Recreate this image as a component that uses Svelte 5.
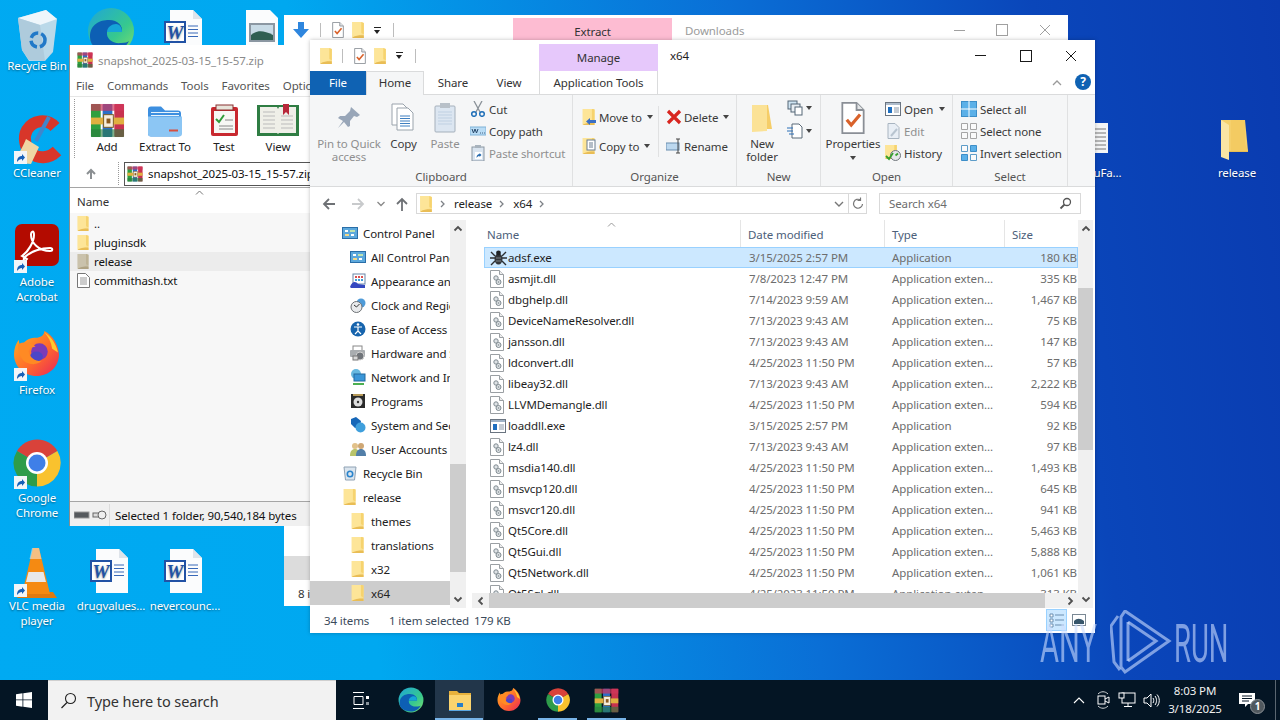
<script>
	const desktopIcons = [
		{ x: 37, y: 10, icon: 'bin', label: 'Recycle Bin' },
		{ x: 37, y: 117, icon: 'ccleaner', label: 'CCleaner', link: true },
		{ x: 37, y: 226, icon: 'acrobat', label: 'Adobe Acrobat', link: true },
		{ x: 37, y: 334, icon: 'firefox', label: 'Firefox', link: true },
		{ x: 37, y: 442, icon: 'chrome', label: 'Google Chrome', link: true },
		{ x: 37, y: 550, icon: 'vlc', label: 'VLC media player', link: true },
		{ x: 111, y: 550, icon: 'word', label: 'drugvalues...' },
		{ x: 185, y: 550, icon: 'word', label: 'nevercounc...' },
		{ x: 111, y: 0, icon: 'edge', label: '' },
		{ x: 185, y: 11, icon: 'word', label: '' },
		{ x: 262, y: 11, icon: 'image', label: '' },
		{ x: 1237, y: 117, icon: 'bigfolder', label: 'release' },
		{ x: 1103, y: 117, icon: 'notes', label: '...uFa...' }
	];

	const navItems = [
		{ name: 'Control Panel', icon: 'control' },
		{ name: 'All Control Panel Items', icon: 'control', child: true },
		{ name: 'Appearance and Personalization', icon: 'appearance', child: true },
		{ name: 'Clock and Region', icon: 'clock', child: true },
		{ name: 'Ease of Access', icon: 'ease', child: true },
		{ name: 'Hardware and Sound', icon: 'hardware', child: true },
		{ name: 'Network and Internet', icon: 'network', child: true },
		{ name: 'Programs', icon: 'programs', child: true },
		{ name: 'System and Security', icon: 'system', child: true },
		{ name: 'User Accounts', icon: 'users', child: true },
		{ name: 'Recycle Bin', icon: 'recycle' },
		{ name: 'release', icon: 'folder' },
		{ name: 'themes', icon: 'folder', child: true },
		{ name: 'translations', icon: 'folder', child: true },
		{ name: 'x32', icon: 'folder', child: true },
		{ name: 'x64', icon: 'folder', child: true, current: true }
	];

	const ext = 'Application exten...';
	const files = [
		{ name: 'adsf.exe', date: '3/15/2025 2:57 PM', type: 'Application', size: '180 KB', icon: 'bug', selected: true },
		{ name: 'asmjit.dll', date: '7/8/2023 12:47 PM', type: ext, size: '335 KB' },
		{ name: 'dbghelp.dll', date: '7/14/2023 9:59 AM', type: ext, size: '1,467 KB' },
		{ name: 'DeviceNameResolver.dll', date: '7/13/2023 9:43 AM', type: ext, size: '75 KB' },
		{ name: 'jansson.dll', date: '7/13/2023 9:43 AM', type: ext, size: '147 KB' },
		{ name: 'ldconvert.dll', date: '4/25/2023 11:50 PM', type: ext, size: '57 KB' },
		{ name: 'libeay32.dll', date: '7/13/2023 9:43 AM', type: ext, size: '2,222 KB' },
		{ name: 'LLVMDemangle.dll', date: '4/25/2023 11:50 PM', type: ext, size: '594 KB' },
		{ name: 'loaddll.exe', date: '3/15/2025 2:57 PM', type: 'Application', size: '92 KB', icon: 'app' },
		{ name: 'lz4.dll', date: '7/13/2023 9:43 AM', type: ext, size: '97 KB' },
		{ name: 'msdia140.dll', date: '4/25/2023 11:50 PM', type: ext, size: '1,493 KB' },
		{ name: 'msvcp120.dll', date: '4/25/2023 11:50 PM', type: ext, size: '645 KB' },
		{ name: 'msvcr120.dll', date: '4/25/2023 11:50 PM', type: ext, size: '941 KB' },
		{ name: 'Qt5Core.dll', date: '4/25/2023 11:50 PM', type: ext, size: '5,463 KB' },
		{ name: 'Qt5Gui.dll', date: '4/25/2023 11:50 PM', type: ext, size: '5,888 KB' },
		{ name: 'Qt5Network.dll', date: '4/25/2023 11:50 PM', type: ext, size: '1,061 KB' },
		{ name: 'Qt5Sql.dll', date: '4/25/2023 11:50 PM', type: ext, size: '313 KB' }
	];

	const rarItems = [
		{ name: '..', icon: 'folder' },
		{ name: 'pluginsdk', icon: 'folder' },
		{ name: 'release', icon: 'folder', current: true },
		{ name: 'commithash.txt', icon: 'txt' }
	];

	const rarTools = [
		{ label: 'Add', icon: 'rar', width: 52 },
		{ label: 'Extract To', icon: 'extract', width: 64 },
		{ label: 'Test', icon: 'test', width: 54 },
		{ label: 'View', icon: 'book', width: 54 }
	];

	const taskApps = [
		{ icon: 'edge' },
		{ icon: 'explorer', active: true, open: true },
		{ icon: 'firefox' },
		{ icon: 'chrome', open: true },
		{ icon: 'rar', open: true }
	];
</script>

{#snippet folder(w = 14, h = 18)}
	<svg width={w} height={h} viewBox="0 0 14 18">
		<path d="M0 0h10l3 1v17H0z" fill="#fbe08f" />
		<path d="M10 0v12l3 2V1z" fill="#f6d36f" />
		<path d="M3 15h10v3H0l3-3z" fill="#e9bd55" />
		<path d="M0 0h10v14l-10 3z" fill="#fde598" />
	</svg>
{/snippet}

{#snippet propsDoc(size = 16)}
	<svg width={size} height={size} viewBox="0 0 16 18">
		<path d="M2 .5h8l4 4v13H2z" fill="#fff" stroke="#8a8f96" />
		<path d="M10 .5v4h4" fill="#e4e6e8" stroke="#8a8f96" />
		<path d="M4.5 10l2.5 3 5-6" fill="none" stroke="#d9622b" stroke-width="1.8" />
	</svg>
{/snippet}

{#snippet dll()}
	<svg width="14" height="18" viewBox="0 0 14 18">
		<path d="M.5.5h9l4 4v13H.5z" fill="#fff" stroke="#9a9fa3" />
		<path d="M9.5.5v4h4" fill="#eee" stroke="#9a9fa3" />
		<circle cx="6" cy="8" r="2.2" fill="#dfe3e6" stroke="#7f8a90" />
		<circle cx="8.5" cy="12" r="2.5" fill="#dfe3e6" stroke="#7f8a90" />
		<circle cx="8.5" cy="12" r=".8" fill="#7f8a90" />
	</svg>
{/snippet}

{#snippet fileIcon(kind)}
	{#if kind === 'bug'}
		<svg width="17" height="17" viewBox="0 0 17 17">
			<ellipse cx="8.5" cy="10" rx="4" ry="5.5" fill="#33363a" />
			<circle cx="8.5" cy="4" r="2.4" fill="#1f2225" />
			<path d="M1 3l4 4M16 3l-4 4M0 9h5M17 9h-5M1 16l4-4M16 16l-4-4" stroke="#2c2f33" stroke-width="1.4" />
			<path d="M6 9h5M6 12h5" stroke="#7d8288" />
		</svg>
	{:else if kind === 'app'}
		<svg width="16" height="14" viewBox="0 0 16 14">
			<rect x=".5" y=".5" width="15" height="13" fill="#fff" stroke="#6a7480" />
			<rect x="1" y="1" width="14" height="2" fill="#9fb2c6" />
			<rect x="3" y="5" width="4" height="6" fill="#1f6fc0" />
			<path d="M9 6h5M9 8h5M9 10h5" stroke="#8a98a8" />
		</svg>
	{:else}
		{@render dll()}
	{/if}
{/snippet}

{#snippet shortcut()}
	<svg class="link" width="13" height="13" viewBox="0 0 13 13">
		<rect width="13" height="13" fill="#f2f5f8" />
		<path d="M3 11c0-4 2-6 5-6V3l3 3.5L8 10V8C6 8 4.500 9 3 11z" fill="#1660b8" />
	</svg>
{/snippet}

{#snippet wordDoc(size = 48)}
	<svg width={size} height={size} viewBox="0 0 48 48">
		<path d="M9-1h23l9 9v35H9z" fill="#fbfcfd" />
		<path d="M32-1v9h9z" fill="#dfe4ea" />
		<rect x="4" y="11" width="20" height="20" fill="#fff" stroke="#2252a5" stroke-width="2" />
		<text x="14" y="27.500" class="w-mark">W</text>
		<path d="M27 15h10M27 18.500h10M27 22h10M27 25.500h10" stroke="#3868b8" />
	</svg>
{/snippet}

{#snippet edgeIcon(size = 48)}
	<svg width={size} height={size} viewBox="0 0 48 48">
		<defs>
			<linearGradient id="edgeA" x1="0" y1="0" x2="1" y2="1">
				<stop offset="0" stop-color="#1fa6d8" />
				<stop offset=".6" stop-color="#36c88f" />
				<stop offset="1" stop-color="#7fe06a" />
			</linearGradient>
		</defs>
		<circle cx="24" cy="24" r="23" fill="url(#edgeA)" />
		<path d="M3 30C3 17 13 13 22 13c9 0 14 6 13 12H20c-1 7 6 12 14 11 4 0 7-1 8-2-4 8-11 11-18 11C12 45 3 40 3 30z" fill="#0d5fb4" />
		<path d="M20 25c0-5 5-8 9-8s6 4 6 8z" fill="#15a5d8" />
	</svg>
{/snippet}

{#snippet firefoxIcon(size = 48)}
	<svg width={size} height={size} viewBox="0 0 48 48">
		<defs>
			<linearGradient id="foxA" x1="0" y1="0" x2="1" y2="1">
				<stop offset="0" stop-color="#ffb21f" />
				<stop offset=".55" stop-color="#ff6a2c" />
				<stop offset="1" stop-color="#e8245c" />
			</linearGradient>
		</defs>
		<path d="M24 46C11 46 1 36 1 24 1 18 3 13 6 9c0 4 1 6 3 7 2-5 7-9 13-9 9 0 10-5 10-7 3 1 14 9 15 24 0 12-10 22-23 22z" fill="url(#foxA)" />
		<circle cx="27" cy="21" r="8.500" fill="#7b3bb8" />
		<ellipse cx="24" cy="26" rx="6.500" ry="5" fill="#4b46c8" />
		<path d="M5 14c6-4 13-3 18 2-5 0-7 3-7 5 1 6 6 10 13 10-6 5-16 3-20-3-3-4-4-9-4-14z" fill="#ff8a24" />
		<path d="M32 1c7 5 12 12 14 21l-6-4c-1-7-4-12-8-17z" fill="#ffc92e" />
	</svg>
{/snippet}

{#snippet chromeIcon(size = 48)}
	<svg width={size} height={size} viewBox="0 0 48 48">
		<path d="M24 24L4 12A23.500 23.500 0 0 1 44.400 12z" fill="#d9423a" />
		<path d="M24 24L44.400 12A23.500 23.500 0 0 1 24 47.500z" fill="#f9c22e" />
		<path d="M24 24L24 47.500A23.500 23.500 0 0 1 4 12z" fill="#2e9c4a" />
		<circle cx="24" cy="24" r="11" fill="#fff" />
		<circle cx="24" cy="24" r="8.500" fill="#3f7fe8" />
	</svg>
{/snippet}

{#snippet rarIcon(size = 36)}
	<svg class="no-shrink" width={size} height={size} viewBox="0 0 36 36">
		<rect x="1" y="1" width="10" height="34" rx="1" fill="#2e9f3f" />
		<rect x="13" y="1" width="10" height="34" rx="1" fill="#2c6fc8" />
		<rect x="25" y="1" width="10" height="34" rx="1" fill="#c8324f" />
		<rect x="1" y="1" width="34" height="7" fill="#d0365c" opacity=".7" />
		<rect x="1" y="27" width="34" height="8" fill="#2a7d3d" opacity=".6" />
		<rect x="1" y="15" width="34" height="7" fill="#e0b040" />
		<rect x="14" y="12" width="10" height="13" fill="#f6eddc" stroke="#7a5a20" />
		<rect x="17" y="16" width="4" height="5" fill="#8a5a20" />
	</svg>
{/snippet}

{#snippet desktopArt(kind)}
	{#if kind === 'bin'}
		<svg width="48" height="48" viewBox="0 0 48 48">
			<path d="M5 8L33 0l11 9-4 33-8 9H16L9 40z" fill="#c4dbe8" opacity=".95" />
			<path d="M5 8L33 0l11 9-17 6z" fill="#eef6fb" />
			<path d="M16 50L9 40 5 8l22 7 5 36z" fill="#aecbdc" />
			<circle cx="25" cy="30" r="7" fill="none" stroke="#2179c8" stroke-width="3.500" stroke-dasharray="9 3" />
		</svg>
	{:else if kind === 'ccleaner'}
		<svg width="48" height="48" viewBox="0 0 48 48">
			<path d="M42 10C34 1 20 3 14 13 10 20 12 31 18 36c7 6 18 6 26-2" fill="none" stroke="#d8362a" stroke-width="12" />
			<path d="M36 0L23 24" stroke="#3f86cc" stroke-width="4" />
			<path d="M13 22l13 8-8 17-11-1-6-6c5-2 9-11 12-18z" fill="#efd6a4" />
		</svg>
	{:else if kind === 'acrobat'}
		<svg width="48" height="48" viewBox="0 0 48 48">
			<rect x="2" y="-2" width="44" height="42" rx="7" fill="#b30b00" />
			<path d="M9 30c6-4 12-14 12-21 0-5-3-4-3 0 0 8 8 16 19 16 3 0 3-3 0-3-8 0-19 3-25 9-3 3 0 5 2 2z" fill="none" stroke="#fff" stroke-width="2" />
		</svg>
	{:else if kind === 'firefox'}
		<div class="shifted">{@render firefoxIcon(47)}</div>
	{:else if kind === 'chrome'}
		<div class="shifted">{@render chromeIcon(48)}</div>
	{:else if kind === 'vlc'}
		<svg width="48" height="48" viewBox="0 0 48 48">
			<path d="M4 48l4-6h32l4 6z" fill="#e07a10" />
			<path d="M20-2h6l11 46H9z" fill="#f58a12" />
			<path d="M15.500 22h15l2.500 10H13z" fill="#e8e8e8" />
			<path d="M19-2h7l2.500 11h-12z" fill="#f4f4f4" opacity=".5" />
		</svg>
	{:else if kind === 'word'}
		{@render wordDoc()}
	{:else if kind === 'edge'}
		<div class="edge-shift">{@render edgeIcon(48)}</div>
	{:else if kind === 'image'}
		<svg width="48" height="48" viewBox="0 0 48 48">
			<path d="M8-1h24l8 8v41H8z" fill="#fbfcfd" />
			<rect x="12" y="13" width="24" height="17" fill="#c8dbe6" stroke="#8b97a2" stroke-width="2" />
			<path d="M13 24c6-5 12-5 22 0v5H13z" fill="#2f5f52" />
		</svg>
	{:else if kind === 'bigfolder'}
		<svg width="48" height="48" viewBox="0 0 48 48">
			<path d="M8 3h24l3 31H8z" fill="#f5d06c" />
			<path d="M32 3v24l3 7H18V3z" fill="#f3cb62" />
			<path d="M8 3l8 5v35l-8-3z" fill="#fae5a4" />
			<path d="M16 34h19v1H16z" fill="#e8bd55" />
		</svg>
	{:else if kind === 'notes'}
		<svg width="48" height="48" viewBox="0 0 48 48">
			<rect x="5" y="6" width="24" height="30" fill="#f4f5f6" />
			<path d="M7 12H27M7 16H27M7 20H27M7 24H27M7 28H27M7 32H27" stroke="#777" />
		</svg>
	{/if}
{/snippet}

{#snippet navIcon(kind)}
	<svg width="16" height="16" viewBox="0 0 16 16">
		{#if kind === 'control'}
			<rect x=".5" y="2.500" width="15" height="11" fill="#5ca8dc" stroke="#2a6ea8" />
			<rect x="3" y="5" width="3" height="2" fill="#fff" />
			<rect x="8" y="5" width="5" height="2" fill="#bfe3b0" />
			<rect x="3" y="9" width="4" height="2" fill="#f3d98a" />
			<rect x="9" y="9" width="3" height="2" fill="#fff" />
		{:else if kind === 'appearance'}
			<rect x="3" y="1" width="12" height="10" fill="#fff" stroke="#6a86a8" />
			<path d="M5 3h2v2H5zM8 3h2v2H8zM11 3h2v2h-2z" fill="#d94f4f" />
			<path d="M5 6h2v2H5zM8 6h2v2H8zM11 6h2v2h-2z" fill="#3f9fd8" />
			<path d="M0 14c2-6 6-6 8-3l7 1v3H1z" fill="#3448c0" />
		{:else if kind === 'clock'}
			<circle cx="11" cy="6" r="4.500" fill="#4f9bd8" />
			<circle cx="6.500" cy="10" r="5.500" fill="#e8eaec" stroke="#6c7074" />
			<path d="M6.500 10l3-3M6.500 10L4 8" stroke="#333" />
		{:else if kind === 'ease'}
			<circle cx="8" cy="8" r="7.500" fill="#1764ad" />
			<circle cx="8" cy="3.500" r="1.300" fill="#fff" />
			<path d="M4 6h8M8 6v4l-3 3M8 10l3 3" stroke="#fff" stroke-width="1.200" fill="none" />
		{:else if kind === 'hardware'}
			<rect x="3" y="1" width="9" height="5" fill="#fff" stroke="#888" />
			<rect x="0" y="5" width="15" height="7" rx="1" fill="#a9adb0" />
			<circle cx="10" cy="11" r="4" fill="#70757a" stroke="#d0d0d0" />
			<rect x="3" y="11" width="5" height="4" fill="#d8d8d8" stroke="#777" />
		{:else if kind === 'network'}
			<circle cx="6" cy="5" r="5" fill="#66b8e0" />
			<rect x="4" y="5" width="11" height="7" fill="#3a96d8" stroke="#23689e" />
			<path d="M3 15h11" stroke="#4caf50" stroke-width="2" />
		{:else if kind === 'programs'}
			<rect x="1" y="1" width="14" height="14" fill="#2a2a2a" />
			<rect x="3" y="1" width="10" height="2" fill="#b79a58" />
			<circle cx="8" cy="9" r="4.500" fill="#ddd" />
			<circle cx="8" cy="9" r="1.200" fill="#333" />
		{:else if kind === 'system'}
			<path d="M1 2l5-2 5 4-1 6-5 1-4-4z" fill="#1667b8" />
			<circle cx="10.500" cy="10.500" r="5" fill="#3f9fdc" />
		{:else if kind === 'users'}
			<circle cx="5" cy="5" r="3" fill="#e2c18a" />
			<path d="M0 15c0-5 2-7 5-7s5 2 5 7z" fill="#b9c46a" />
			<circle cx="11" cy="5" r="3" fill="#cfa774" />
			<path d="M6 15c0-5 2-7 5-7s5 2 5 7z" fill="#527fa8" />
		{:else if kind === 'recycle'}
			<path d="M2 2h12l-1.500 13h-9z" fill="#dbe5ee" stroke="#8fa2b4" />
			<circle cx="8" cy="9" r="2.700" fill="none" stroke="#2a84cc" stroke-width="1.600" />
		{:else if kind === 'folder'}
			<g transform="translate(1.500 -1)">{@render folder(13, 18)}</g>
		{/if}
	</svg>
{/snippet}

{#snippet ribbonIcon(kind)}
	<svg width="16" height="16" viewBox="0 0 16 16">
		{#if kind === 'cut'}
			<path d="M4 0l6 11M12 0L6 11" stroke="#8a9198" stroke-width="1.300" />
			<circle cx="4" cy="13" r="2.300" fill="none" stroke="#1f6fb8" stroke-width="1.500" />
			<circle cx="12" cy="13" r="2.300" fill="none" stroke="#1f6fb8" stroke-width="1.500" />
		{:else if kind === 'copypath'}
			<rect x="0" y="4" width="16" height="8" fill="#b9dcf5" stroke="#7fb2d8" />
			<path d="M2 6l1.500 4L5 6l1.500 4L8 6M10 10h.8M12 10h.8M14 10h.8" stroke="#28486a" fill="none" />
		{:else if kind === 'pasteshortcut'}
			<rect x="2" y="2" width="12" height="14" fill="#d9e4ef" stroke="#8b97a3" />
			<rect x="5" y="0" width="6" height="3" fill="#a8b3bd" />
			<rect x="5" y="7" width="7" height="7" fill="#fff" />
			<path d="M6.500 13c0-3 1.500-4 3-4V8l2 2-2 2v-1c-1 0-2 .5-3 2z" fill="#2a6db0" />
		{:else if kind === 'moveto'}
			<g transform="translate(1.500 -1)">{@render folder(13, 18)}</g>
			<path d="M15 11H9v-2l-4 3.500L9 16v-2h6z" fill="#3b6fc4" />
		{:else if kind === 'copyto'}
			<g transform="translate(1.500 -1)">{@render folder(13, 18)}</g>
			<rect x="6" y="2" width="8" height="10" fill="#fff" stroke="#6a7c90" />
			<path d="M8 5h4M8 7h4M8 9h4" stroke="#6a7c90" />
		{:else if kind === 'delete'}
			<path d="M2 2l12 12M14 2L2 14" stroke="#d8251f" stroke-width="3.200" />
		{:else if kind === 'rename'}
			<rect x="0" y="5" width="13" height="7" fill="#bcd8ef" stroke="#6a8eb0" />
			<path d="M12 1v14M10 1h4M10 15h4" stroke="#444" />
		{:else if kind === 'newitem'}
			<rect x="1" y="1" width="9" height="8" fill="#cfe4f2" stroke="#567" />
			<rect x="4" y="4" width="9" height="8" fill="#e8eef3" stroke="#567" />
			<rect x="8" y="7" width="7" height="8" fill="#fff" stroke="#567" />
		{:else if kind === 'easy'}
			<path d="M5 1h7l3 3v11H5z" fill="#fff" stroke="#5b6a78" />
			<path d="M0 5h6M0 8h6M2 11h5" stroke="#2a6fb8" stroke-width="1.200" />
		{:else if kind === 'open'}
			<rect x=".5" y="1.500" width="15" height="13" fill="#fff" stroke="#6a7480" />
			<rect x="1" y="2" width="14" height="2" fill="#aebccb" />
			<rect x="3" y="6" width="4" height="6" fill="#1f6fc0" />
			<path d="M9 7h5M9 9h5M9 11h5" stroke="#8a98a8" />
		{:else if kind === 'edit'}
			<path d="M3 .5h7l4 4v11H3z" fill="#e8eef5" stroke="#a8b4c0" />
			<path d="M6 13l6-7" stroke="#b8c4d0" stroke-width="2" />
		{:else if kind === 'history'}
			<g transform="translate(0 -2)">{@render folder(13, 16)}</g>
			<circle cx="10.500" cy="10.500" r="5" fill="#e5e7e9" stroke="#70767c" />
			<path d="M10.500 10.500l2.500-2M1 11l3 3 4-6" stroke="#37a02c" stroke-width="1.800" fill="none" />
		{:else if kind === 'selall'}
			<rect x=".5" y=".5" width="15" height="15" fill="#5bb0e8" stroke="#3d8ec8" />
			<path d="M8 0v16M0 8h16" stroke="#fff" />
		{:else if kind === 'selnone'}
			<path d="M.5.500h6v6h-6zM9.500.500h6v6h-6zM.5 9.500h6v6h-6zM9.500 9.500h6v6h-6z" fill="#fafafa" stroke="#a5a5a5" />
		{:else if kind === 'invert'}
			<path d="M9.500.500h6v6h-6zM.5 9.500h6v6h-6z" fill="#5bb0e8" stroke="#3d8ec8" />
			<path d="M.5.500h6v6h-6zM9.500 9.500h6v6h-6z" fill="#fafafa" stroke="#5d9cc8" />
		{/if}
	</svg>
{/snippet}

{#snippet chevron(color = '#7d8186')}
	<svg width="8" height="8" viewBox="0 0 8 8"><path d="M2 1l3 3-3 3" fill="none" stroke={color} stroke-width="1.300" /></svg>
{/snippet}

{#snippet scrollArrow(rotate = 0)}
	<svg class="scroll-arrow" width="10" height="10" viewBox="0 0 10 10" style="transform: rotate({rotate}deg)">
		<path d="M1.500 6.500L5 3l3.500 3.500" fill="none" stroke="#505050" stroke-width="1.800" />
	</svg>
{/snippet}

{#snippet small(icon, label, disabled = false, hasCaret = false)}
	<div class="small" class:disabled>
		{@render ribbonIcon(icon)}
		<span>{label}</span>
		{#if hasCaret}<i class="caret"></i>{/if}
	</div>
{/snippet}

<div class="desktop">
	{#each desktopIcons as d}
		<div class="desk-item" style="left: {d.x - 37}px; top: {d.y}px">
			<div class="desk-art">
				{@render desktopArt(d.icon)}
				{#if d.link}{@render shortcut()}{/if}
			</div>
			{#if d.label}<span>{d.label}</span>{/if}
		</div>
	{/each}

	<section class="win downloads">
		<div class="dl-title">
			<svg class="dl-arrow" width="18" height="18" viewBox="0 0 18 18"><path d="M6 1h6v7h5l-8 9-8-9h5z" fill="#2e86de" /></svg>
			<b class="qat-sep"></b>
			{@render propsDoc(16)}
			{@render folder(13, 16)}
			<i class="qat-drop"></i>
			<b class="qat-sep"></b>
			<div class="extract">Extract</div>
			<span class="dl-name">Downloads</span>
			<div class="controls faded">
				<span class="c-min"></span><span class="c-max"></span>
				<svg width="12" height="12" viewBox="0 0 12 12"><path d="M1 1l10 10M11 1L1 11" stroke="#a0a0a0" /></svg>
			</div>
		</div>
		<div class="grow"></div>
		<div class="dl-row"></div>
		<div class="dl-status">8 items</div>
	</section>

	<section class="win rar">
		<div class="rar-title">
			{@render rarIcon(16)}
			<span>snapshot_2025-03-15_15-57.zip</span>
		</div>
		<div class="rar-menu">
			<span>File</span><span>Commands</span><span>Tools</span><span>Favorites</span><span>Options</span>
		</div>
		<div class="rar-tools">
			{#each rarTools as t}
				<div class="rar-tool" style="width: {t.width}px">
					{#if t.icon === 'rar'}
						{@render rarIcon(35)}
					{:else if t.icon === 'extract'}
						<svg width="36" height="34" viewBox="0 0 36 34">
							<path d="M1 6a3 3 0 0 1 3-3h10l4 4h13a3 3 0 0 1 3 3v20a3 3 0 0 1-3 3H4a3 3 0 0 1-3-3z" fill="#3d8fe0" />
							<path d="M1 13h34v17a3 3 0 0 1-3 3H4a3 3 0 0 1-3-3z" fill="#8cc6f4" />
							<path d="M4 9h28M4 12h28" stroke="#e8f3fb" />
							<rect x="22" y="26" width="9" height="2" fill="#d64f3f" />
						</svg>
					{:else if t.icon === 'test'}
						<svg width="29" height="33" viewBox="0 0 29 33">
							<rect x="1" y="3" width="27" height="29" rx="2" fill="#c8282f" />
							<rect x="4" y="7" width="21" height="22" fill="#f7f7f4" />
							<rect x="6" y="1" width="17" height="5" fill="#e8e4da" stroke="#8a3030" />
							<path d="M6 15l3 3 5-7" fill="none" stroke="#2f9c3a" stroke-width="2" />
							<path d="M15 16h8M9 22h14M9 25h14" stroke="#888" />
						</svg>
					{:else}
						<svg width="42" height="33" viewBox="0 0 42 33">
							<rect x="0" y="1" width="42" height="31" fill="#2f7d43" />
							<path d="M3 3h17l1 2 1-2h17v26H22l-1 1-1-1H3z" fill="#efefe8" />
							<path d="M6 8h12M6 12h12M6 16h12M6 20h12M6 24h12M24 12h12M24 16h12M24 20h12M24 24h12" stroke="#bbb" />
							<path d="M26 0h6v11l-3-3-3 3z" fill="#b8283a" />
						</svg>
					{/if}
					<span>{t.label}</span>
				</div>
			{/each}
		</div>
		<div class="rar-addr">
			<svg class="rar-up" width="12" height="12" viewBox="0 0 12 12"><path d="M6 11V2M2 6l4-4 4 4" fill="none" stroke="#8b8f92" stroke-width="2" /></svg>
			<div class="rar-path">
				{@render rarIcon(16)}
				<span>snapshot_2025-03-15_15-57.zip</span>
			</div>
		</div>
		<div class="rar-head">
			<span>Name</span>
			<svg class="rar-sort" width="9" height="5" viewBox="0 0 9 5"><path d="M1 4.500L4.500 1 8 4.500" fill="none" stroke="#777" /></svg>
		</div>
		<div class="rar-list">
			{#each rarItems as r}
				<div class="rar-row" class:current={r.current}>
					{#if r.icon === 'folder'}
						<span class="rar-icon" class:dim={r.current}>{@render folder(13, 15)}</span>
					{:else}
						<svg width="13" height="15" viewBox="0 0 13 15">
							<path d="M.5.500h8l4 4v10H.5z" fill="#fff" stroke="#777" />
							<path d="M3 5h7M3 7h7M3 9h7M3 11h7" stroke="#999" />
						</svg>
					{/if}
					<span>{r.name}</span>
				</div>
			{/each}
		</div>
		<div class="rar-status">
			<div class="rar-drive">
				<svg width="34" height="11" viewBox="0 0 34 11">
					<rect x="0" y="2" width="15" height="6" fill="#55595d" stroke="#999" />
					<rect x="19" y="3" width="10" height="4" fill="#ddd" stroke="#666" />
					<circle cx="28" cy="5" r="4" fill="#eee" stroke="#666" />
				</svg>
			</div>
			<span>Selected 1 folder, 90,540,184 bytes</span>
		</div>
	</section>

	<section class="win explorer">
		<div class="ex-title">
			<div class="qat">
				{@render folder(13, 16)}
				<b class="qat-sep"></b>
				{@render propsDoc(16)}
				{@render folder(13, 16)}
				<i class="qat-drop"></i>
				<b class="qat-sep"></b>
			</div>
			<div class="manage">Manage</div>
			<span class="ex-name">x64</span>
			<div class="controls">
				<span class="c-min"></span><span class="c-max"></span>
				<svg width="12" height="12" viewBox="0 0 12 12"><path d="M1 1l10 10M11 1L1 11" stroke="#1a1a1a" /></svg>
			</div>
		</div>

		<div class="tabs">
			<span class="tab file">File</span>
			<span class="tab home">Home</span>
			<span class="tab share">Share</span>
			<span class="tab view">View</span>
			<span class="tab apptools">Application Tools</span>
			<svg class="collapse" width="10" height="8" viewBox="0 0 10 8"><path d="M1 6l4-4 4 4" fill="none" stroke="#9a9a9a" stroke-width="1.300" /></svg>
			<span class="help">?</span>
		</div>

		<div class="ribbon">
			<div class="group" style="width: 263px">
				<div class="group-body">
					<div class="big disabled" style="width: 78px">
						<div class="big-art">
							<svg width="24" height="24" viewBox="0 0 24 24"><path d="M14 1l9 8-3 2-3-1-4 5 0 5-2 1-4-5-6 6 5-7-5-3 2-2h5l5-5z" fill="#98a6b8" /></svg>
						</div>
						<span>Pin to Quick<br />access</span>
					</div>
					<div class="big" style="width: 31px">
						<div class="big-art">
							<svg width="25" height="30" viewBox="0 0 25 30">
								<path d="M1 1h11l5 5v16H1z" fill="#fff" stroke="#9aa3ac" />
								<path d="M6 5h11l5 5v17H6z" fill="#fff" stroke="#9aa3ac" />
								<path d="M9 13h10M9 15.500h10M9 18h10M9 20.500h10M9 23h10" stroke="#3f7fc0" />
							</svg>
						</div>
						<span>Copy</span>
					</div>
					<div class="big disabled paste" style="width: 40px">
						<div class="big-art">
							<svg width="22" height="30" viewBox="0 0 22 30">
								<rect x="1" y="3" width="20" height="26" rx="1" fill="#dce6f1" stroke="#a5b0bb" />
								<rect x="6" y="0" width="10" height="5" fill="#b8c0c8" />
								<path d="M4 9h14M4 12h14M4 15h14M4 18h14M4 21h14" stroke="#bfd0e2" />
							</svg>
						</div>
						<span>Paste</span>
					</div>
					<div class="small-col clip-small">
						{@render small('cut', 'Cut')}
						{@render small('copypath', 'Copy path')}
						{@render small('pasteshortcut', 'Paste shortcut', true)}
					</div>
				</div>
				<div class="group-label">Clipboard</div>
			</div>

			<div class="group" style="width: 164px">
				<div class="group-body organize">
					<div class="tall-col" style="width: 77px">
						{@render small('moveto', 'Move to', false, true)}
						{@render small('copyto', 'Copy to', false, true)}
					</div>
					<div class="tall-col second">
						{@render small('delete', 'Delete', false, true)}
						{@render small('rename', 'Rename')}
					</div>
				</div>
				<div class="group-label">Organize</div>
			</div>

			<div class="group" style="width: 84px">
				<div class="group-body">
					<div class="big" style="width: 50px">
						<div class="big-art">
							<svg width="25" height="30" viewBox="0 0 25 30">
								<path d="M2 2h16l4 24H2z" fill="#f5cd68" />
								<path d="M2 2h15v26l-15 1z" fill="#fbe296" />
							</svg>
						</div>
						<span>New<br />folder</span>
					</div>
					<div class="new-col">
						<div class="small">{@render ribbonIcon('newitem')}<i class="caret tight"></i></div>
						<div class="small">{@render ribbonIcon('easy')}<i class="caret tight"></i></div>
					</div>
				</div>
				<div class="group-label">New</div>
			</div>

			<div class="group" style="width: 132px">
				<div class="group-body">
					<div class="big" style="width: 64px">
						<div class="big-art">{@render propsDoc(32)}</div>
						<span>Properties<br /><i class="caret solo"></i></span>
					</div>
					<div class="small-col">
						{@render small('open', 'Open', false, true)}
						{@render small('edit', 'Edit', true)}
						{@render small('history', 'History')}
					</div>
				</div>
				<div class="group-label">Open</div>
			</div>

			<div class="group last" style="width: 115px">
				<div class="group-body">
					<div class="small-col select">
						{@render small('selall', 'Select all')}
						{@render small('selnone', 'Select none')}
						{@render small('invert', 'Invert selection')}
					</div>
				</div>
				<div class="group-label">Select</div>
			</div>
		</div>

		<div class="addr">
			<svg class="nav-btn back" width="18" height="16" viewBox="0 0 18 16"><path d="M15 8H4M9 3L4 8l5 5" fill="none" stroke="#6e7175" stroke-width="1.800" /></svg>
			<svg class="nav-btn fwd" width="18" height="16" viewBox="0 0 18 16"><path d="M3 8h11M9 3l5 5-5 5" fill="none" stroke="#c8cacc" stroke-width="1.800" /></svg>
			<svg class="nav-btn drop" width="10" height="8" viewBox="0 0 10 8"><path d="M1.500 2L5 5.500 8.500 2" fill="none" stroke="#888" stroke-width="1.300" /></svg>
			<svg class="nav-btn up" width="18" height="16" viewBox="0 0 18 16"><path d="M9 15V3M4 8l5-5 5 5" fill="none" stroke="#6e7175" stroke-width="1.800" /></svg>
			<div class="crumbs">
				<span class="crumb-icon">{@render folder(13, 16)}</span>
				{@render chevron()}
				<span class="crumb">release</span>
				{@render chevron()}
				<span class="crumb">x64</span>
				{@render chevron()}
				<div class="grow"></div>
				<svg class="addr-drop" width="10" height="8" viewBox="0 0 10 8"><path d="M1 2l4 4 4-4" fill="none" stroke="#777" stroke-width="1.400" /></svg>
				<div class="refresh">
					<svg width="12" height="13" viewBox="0 0 12 13"><path d="M10.500 7a4.500 4.500 0 1 1-2-4M8.500 .5V3.500H5.500" fill="none" stroke="#777" stroke-width="1.200" /></svg>
				</div>
			</div>
			<div class="search">
				<span>Search x64</span>
				<svg width="13" height="13" viewBox="0 0 13 13"><circle cx="8" cy="5" r="3.500" fill="none" stroke="#555" stroke-width="1.300" /><path d="M5.500 7.500L1.500 11.500" stroke="#555" stroke-width="1.800" /></svg>
			</div>
		</div>

		<div class="ex-body">
			<nav class="nav-pane">
				{#each navItems as n}
					<div class="nav-row" class:child={n.child} class:current={n.current}>
						{@render navIcon(n.icon)}
						<span>{n.name}</span>
					</div>
				{/each}
			</nav>
			<div class="vscroll nav-scroll">
				{@render scrollArrow()}
				<div class="nav-gap"></div>
				<div class="thumb nav-thumb"></div>
				<div class="grow"></div>
				{@render scrollArrow(180)}
			</div>

			<div class="files">
				<div class="list-wrap">
					<div class="list-head">
						<span class="cell name">Name</span>
						<span class="cell date">Date modified</span>
						<span class="cell kind">Type</span>
						<span class="cell size">Size</span>
						<svg class="sort" width="9" height="5" viewBox="0 0 9 5"><path d="M1 4.500L4.500 1 8 4.500" fill="none" stroke="#999" /></svg>
					</div>
					<div class="rows">
						{#each files as f}
							<div class="row" class:selected={f.selected}>
								<span class="cell name">
									<span class="file-icon">{@render fileIcon(f.icon)}</span>
									{f.name}
								</span>
								<span class="cell date">{f.date}</span>
								<span class="cell kind">{f.type}</span>
								<span class="cell size">{f.size}</span>
							</div>
						{/each}
					</div>
					<div class="hscroll">
						{@render scrollArrow(-90)}
						<div class="thumb h-thumb"></div>
						<div class="grow"></div>
						{@render scrollArrow(90)}
					</div>
				</div>
				<div class="vscroll list-scroll">
					{@render scrollArrow()}
					<div class="list-gap"></div>
					<div class="thumb list-thumb"></div>
					<div class="grow"></div>
					{@render scrollArrow(180)}
				</div>
			</div>
		</div>

		<div class="ex-status">
			<span class="st-count">34 items</span>
			<span class="st-sel">1 item selected</span>
			<span class="st-size">179 KB</span>
			<div class="grow"></div>
			<div class="view-btn on">
				<svg width="16" height="16" viewBox="0 0 16 16"><path d="M1 2h3v3H1zM1 7h3v3H1zM1 12h3v3H1z" fill="#fff" stroke="#6a8eb0" /><path d="M6 3h9M6 8h9M6 13h9" stroke="#6a8eb0" /></svg>
			</div>
			<div class="view-btn">
				<svg width="14" height="12" viewBox="0 0 14 12"><rect x=".5" y=".5" width="13" height="11" fill="#fff" stroke="#7a8894" /><path d="M2 7c3-3 6-3 10 0v3H2z" fill="#36556a" /></svg>
			</div>
		</div>
	</section>

	<div class="watermark">
		<span class="wm-any">ANY</span>
		<svg class="wm-logo" width="62" height="64" viewBox="0 0 62 64">
			<path d="M8 6L1 16l3 36 6 8" fill="none" stroke="currentColor" stroke-width="3" />
			<path d="M15 1l44 30-44 31-4-5V7zM18 12l28 19-28 20" fill="none" stroke="currentColor" stroke-width="3" />
			<path d="M18 12v39" stroke="currentColor" stroke-width="3" />
		</svg>
		<span class="wm-run">RUN</span>
	</div>

	<footer class="taskbar">
		<div class="start">
			<svg width="16" height="16" viewBox="0 0 16 16"><path d="M0 2.200L6.500 1.300v6.200H0zM7.300 1.200L16 0v7.500H7.300zM0 8.300h6.500v6.400L0 13.800zM7.300 8.300H16V16l-8.700-1.200z" fill="#fff" /></svg>
		</div>
		<div class="task-search">
			<svg width="17" height="17" viewBox="0 0 17 17"><circle cx="10.500" cy="6.500" r="5" fill="none" stroke="#222" stroke-width="1.100" /><path d="M7 10.500L1.500 16" stroke="#222" stroke-width="1.200" /></svg>
			<span>Type here to search</span>
		</div>
		<div class="task-view">
			<svg width="17" height="17" viewBox="0 0 17 17"><path d="M1 .5h11M1 16.500h11M2 4.500h9v8H2z" fill="none" stroke="#fff" /><rect x="14" y="4" width="3" height="3" fill="#fff" /><rect x="14" y="10" width="3" height="3" fill="#8a949c" /></svg>
		</div>
		<div class="task-apps">
			{#each taskApps as a}
				<div class="task-app" class:active={a.active} class:open={a.open}>
					{#if a.icon === 'edge'}
						{@render edgeIcon(26)}
					{:else if a.icon === 'firefox'}
						{@render firefoxIcon(24)}
					{:else if a.icon === 'chrome'}
						{@render chromeIcon(24)}
					{:else if a.icon === 'rar'}
						{@render rarIcon(25)}
					{:else}
						<svg width="24" height="24" viewBox="0 0 24 24">
							<path d="M1 3h8l2 2h12v4H1z" fill="#e8b23c" />
							<rect x="1" y="7" width="22" height="15" fill="#fbd46e" />
							<rect x="9" y="15" width="6" height="4" fill="#2a7fc8" />
							<path d="M1 22h22v1H1z" fill="#5aa5e0" />
						</svg>
					{/if}
				</div>
			{/each}
		</div>
		<div class="grow"></div>
		<div class="tray-icon">
			<svg width="12" height="7" viewBox="0 0 12 7"><path d="M1 6l5-5 5 5" fill="none" stroke="#fff" stroke-width="1.100" /></svg>
		</div>
		<div class="tray-icon">
			<svg width="14" height="18" viewBox="0 0 14 18"><path d="M2 3c3-3 7-3 10 0M2 15c3 3 7 3 10 0" fill="none" stroke="#cfd3d6" /><rect x="2" y="5" width="7" height="8" fill="none" stroke="#fff" /><path d="M9 8l4-2v6l-4-2" fill="none" stroke="#fff" /></svg>
		</div>
		<div class="tray-icon">
			<svg width="18" height="16" viewBox="0 0 18 16"><rect x="4" y="1" width="13" height="10" fill="none" stroke="#fff" /><rect x="1" y="1" width="5" height="5" fill="#041524" stroke="#fff" /><path d="M10 11v3M6 14.500h8" stroke="#fff" /></svg>
		</div>
		<div class="tray-icon">
			<svg width="17" height="15" viewBox="0 0 17 15"><path d="M1 5h3l4-4v13L4 10H1z" fill="none" stroke="#fff" /><path d="M10 5c1 1.500 1 3.500 0 5M12 3c2 2.500 2 6.500 0 9M14 1.500c3 3.500 3 8.500 0 12" fill="none" stroke="#fff" /></svg>
		</div>
		<div class="clock">
			<span>8:03 PM</span>
			<span>3/18/2025</span>
		</div>
		<div class="notify">
			<svg width="17" height="15" viewBox="0 0 17 15"><path d="M0 0h16v11H9l-3 3v-3H0z" fill="#fff" /><path d="M3 3h10M3 5.500h10M3 8h7" stroke="#041524" /></svg>
			<span class="badge">1</span>
		</div>
		<div class="show-desktop"></div>
	</footer>
</div>

<style>
	:global(body) {
		margin: 0;
		overflow: hidden;
	}

	.desktop {
		position: relative;
		width: 1280px;
		height: 720px;
		overflow: hidden;
		font-family: 'Noto Sans', 'Open Sans', sans-serif;
		font-size: 11.5px;
		letter-spacing: -0.1px;
		color: #1e1e1e;
		background: linear-gradient(82deg, #00aaf2 0%, #00a8f0 28%, #0a6fd6 60%, #0a46ba 82%, #0a3bb0 100%);
	}

	.grow {
		flex: 1;
	}

	.no-shrink {
		flex: none;
	}

	.desk-item {
		position: absolute;
		width: 74px;
		display: flex;
		flex-direction: column;
		align-items: center;
		color: #fff;
		text-align: center;
		line-height: 15px;
		text-shadow: 0 1px 2px rgba(0, 0, 0, 0.45);
	}

	.desk-art {
		position: relative;
		width: 48px;
		height: 48px;
	}

	.desk-art :global(svg) {
		display: block;
		overflow: visible;
	}

	.shifted {
		margin-top: -3px;
	}

	.edge-shift {
		margin-top: 7px;
	}

	.link {
		position: absolute;
		left: 1px;
		top: 34px;
	}

	.w-mark {
		font-family: 'Liberation Serif', serif;
		font-size: 19px;
		font-weight: 700;
		font-style: italic;
		fill: #2252a5;
		text-anchor: middle;
	}

	.win {
		position: absolute;
		background: #fff;
		box-sizing: border-box;
		display: flex;
		flex-direction: column;
		overflow: hidden;
	}

	.downloads {
		left: 284px;
		top: 15px;
		width: 784px;
		height: 591px;
	}

	.dl-title {
		display: flex;
		align-items: center;
		height: 30px;
		gap: 6px;
		padding-left: 8px;
		color: #999;
	}

	.dl-arrow {
		margin-right: 1px;
	}

	.qat-sep {
		width: 1px;
		height: 14px;
		background: #bdbdbd;
		margin: 0 3px;
	}

	.qat-drop {
		width: 7px;
		height: 6px;
		margin: 0 3px;
		border-top: 1px solid #222;
		position: relative;
	}

	.qat-drop::after {
		content: '';
		position: absolute;
		left: 0;
		top: 2px;
		border: 3.5px solid transparent;
		border-top: 4px solid #222;
		border-bottom: 0;
	}

	.extract {
		width: 159px;
		height: 22px;
		align-self: flex-start;
		margin: 3px 0 0 110px;
		line-height: 28px;
		text-align: center;
		background: #fdbcd2;
		color: #333;
	}

	.dl-name {
		margin-left: 7px;
		color: #9b9b9b;
	}

	.controls {
		margin-left: auto;
		display: flex;
		align-items: center;
		width: 97px;
		justify-content: space-between;
		margin-right: 17px;
	}

	.c-min {
		width: 11px;
		height: 1px;
		background: #1a1a1a;
	}

	.c-max {
		width: 10px;
		height: 10px;
		border: 1px solid #1a1a1a;
	}

	.faded .c-min {
		background: #a0a0a0;
	}

	.faded .c-max {
		border-color: #a0a0a0;
	}

	.dl-row {
		height: 24px;
		background: #dcdcdc;
	}

	.dl-status {
		height: 26px;
		line-height: 28px;
		padding-left: 14px;
		color: #333;
	}

	.rar {
		left: 69px;
		top: 45px;
		width: 241px;
		height: 481px;
		background: #f7f7f7;
		border-left: 1px solid #8c8c8c;
	}

	.rar-title {
		height: 30px;
		flex: none;
		display: flex;
		align-items: center;
		gap: 5px;
		padding-left: 7px;
		background: #fff;
		color: #8b8b8b;
		white-space: nowrap;
	}

	.rar-menu {
		height: 21px;
		flex: none;
		display: flex;
		align-items: center;
		gap: 13px;
		padding-left: 6px;
		background: #fff;
		color: #555;
		white-space: nowrap;
		border-bottom: 1px solid #e6e6e6;
	}

	.rar-tools {
		height: 63px;
		flex: none;
		display: flex;
		padding-left: 11px;
		background: #fff;
		color: #222;
		position: relative;
	}

	.rar-tools::before,
	.rar-addr::before {
		content: '';
		position: absolute;
		left: 4px;
		top: 2px;
		bottom: 2px;
		border-left: 1px dotted #999;
	}

	.rar-tool {
		flex: none;
		display: flex;
		flex-direction: column;
		align-items: center;
		padding-top: 6px;
		gap: 1px;
	}

	.rar-tool svg {
		height: 35px;
	}

	.rar-addr {
		height: 28px;
		flex: none;
		display: flex;
		align-items: center;
		position: relative;
		background: #fff;
		border-bottom: 1px solid #a5a5a5;
		box-sizing: border-box;
		padding-left: 15px;
	}

	.rar-addr::before {
		left: 48px;
	}

	.rar-up {
		flex: none;
	}

	.rar-path {
		margin-left: 27px;
		height: 24px;
		width: 190px;
		flex: none;
		box-sizing: border-box;
		border: 1px solid #555;
		border-right: 0;
		display: flex;
		align-items: center;
		gap: 5px;
		padding-left: 2px;
		white-space: nowrap;
		color: #111;
	}

	.rar-head {
		height: 25px;
		flex: none;
		padding: 6px 0 0 7px;
		box-sizing: border-box;
		background: #fff;
		color: #333;
		position: relative;
	}

	.rar-sort {
		position: absolute;
		left: 125px;
		top: 2px;
	}

	.rar-list {
		flex: 1;
		padding-top: 1px;
	}

	.rar-row {
		height: 19px;
		display: flex;
		align-items: center;
		gap: 4px;
		padding-left: 7px;
		color: #111;
	}

	.rar-row.current {
		background: #ececec;
	}

	.rar-icon {
		display: flex;
	}

	.rar-icon.dim {
		filter: saturate(0.35) brightness(0.85);
	}

	.rar-status {
		height: 25px;
		flex: none;
		display: flex;
		align-items: center;
		box-sizing: border-box;
		background: #f0f0f0;
		border-top: 1px solid #a5a5a5;
		padding-top: 2px;
		color: #111;
		white-space: nowrap;
	}

	.rar-drive {
		width: 40px;
		height: 100%;
		display: flex;
		align-items: center;
		padding-left: 4px;
		box-sizing: border-box;
		border-right: 1px solid #dcdcdc;
		margin-right: 5px;
	}

	.explorer {
		left: 310px;
		top: 40px;
		width: 785px;
		height: 593px;
		box-shadow: 0 0 4px rgba(0, 0, 0, 0.25);
	}

	.ex-title {
		height: 31px;
		flex: none;
		display: flex;
		align-items: flex-end;
	}

	.qat {
		width: 229px;
		height: 31px;
		flex: none;
		box-sizing: border-box;
		padding-left: 10px;
		display: flex;
		align-items: center;
		gap: 6px;
	}

	.manage {
		width: 119px;
		height: 27px;
		line-height: 28px;
		text-align: center;
		background: #e6c8fb;
		color: #333;
	}

	.ex-name {
		margin: 0 0 7px 12px;
		line-height: 16px;
	}

	.ex-title .controls {
		height: 31px;
		width: 102px;
		margin-right: 18px;
	}

	.tabs {
		height: 24px;
		flex: none;
		display: flex;
		align-items: stretch;
		position: relative;
		margin-bottom: -1px;
		z-index: 1;
	}

	.tab {
		display: flex;
		align-items: center;
		justify-content: center;
		box-sizing: border-box;
		padding-bottom: 2px;
		color: #333;
	}

	.file {
		width: 56px;
		background: #0f62b3;
		color: #fff;
	}

	.home {
		width: 58px;
		background: #f5f6f7;
		border: 1px solid #dadbdc;
		border-bottom: 0;
	}

	.share {
		width: 58px;
	}

	.view {
		width: 54px;
	}

	.apptools {
		width: 119px;
		margin-left: 3px;
		border: 1px solid #dadbdc;
		border-width: 0 1px;
	}

	.collapse {
		margin: 8px 0 0 auto;
	}

	.help {
		width: 16px;
		height: 16px;
		margin: 3px 4px 0 13px;
		border-radius: 50%;
		background: #0f62b3;
		color: #fff;
		font-weight: 700;
		font-size: 12px;
		line-height: 16px;
		text-align: center;
	}

	.ribbon {
		height: 93px;
		flex: none;
		display: flex;
		box-sizing: border-box;
		background: #f5f6f7;
		border-top: 1px solid #dadbdc;
		border-bottom: 1px solid #dadbdc;
		color: #3a3a3a;
	}

	.group {
		flex: none;
		box-sizing: border-box;
		display: flex;
		flex-direction: column;
		border-right: 1px solid #e0e1e2;
	}

	.group-body {
		flex: 1;
		display: flex;
	}

	.group-label {
		height: 18px;
		line-height: 17px;
		text-align: center;
		color: #555;
	}

	.big {
		flex: none;
		display: flex;
		flex-direction: column;
		align-items: center;
		padding-top: 5px;
		text-align: center;
		line-height: 13px;
	}

	.big-art {
		height: 35px;
		margin-bottom: 2px;
		display: flex;
		align-items: center;
		justify-content: center;
	}

	.disabled {
		color: #8f8f8f;
	}

	.paste {
		margin-left: 6px;
	}

	.small-col {
		display: flex;
		flex-direction: column;
		padding-top: 3px;
	}

	.clip-small {
		margin-left: 5px;
	}

	.select {
		padding-left: 8px;
	}

	.small {
		height: 22px;
		display: flex;
		align-items: center;
		gap: 3px;
		white-space: nowrap;
	}

	.caret {
		display: inline-block;
		margin-left: 3px;
		border: 3px solid transparent;
		border-top: 4px solid #444;
		border-bottom: 0;
	}

	.caret.tight {
		margin-left: 0;
	}

	.caret.solo {
		margin: 0;
		vertical-align: middle;
	}

	.organize {
		padding: 11px 0 0 8px;
	}

	.tall-col {
		flex: none;
		display: flex;
		flex-direction: column;
		gap: 7px;
		height: 51px;
		box-sizing: border-box;
	}

	.tall-col .small {
		gap: 2px;
	}

	.tall-col.second {
		padding-left: 7px;
		border-left: 1px solid #e0e1e2;
	}

	.new-col {
		display: flex;
		flex-direction: column;
		padding-top: 2px;
		gap: 1px;
	}

	.addr {
		height: 33px;
		flex: none;
		display: flex;
		align-items: center;
	}

	.nav-btn {
		flex: none;
	}

	.back {
		margin-left: 10px;
	}

	.fwd {
		margin-left: 11px;
	}

	.drop {
		margin-left: 9px;
	}

	.up {
		margin-left: 7px;
	}

	.crumbs {
		margin-left: 5px;
		width: 451px;
		height: 21px;
		flex: none;
		box-sizing: border-box;
		border: 1px solid #d9d9d9;
		display: flex;
		align-items: center;
		gap: 3px;
		padding-left: 3px;
	}

	.crumb-icon {
		display: flex;
		margin-right: 3px;
	}

	.crumb {
		margin: 0 3px 0 4px;
		color: #222;
	}

	.addr-drop {
		margin-right: 1px;
	}

	.refresh {
		width: 17px;
		height: 100%;
		display: flex;
		align-items: center;
		justify-content: center;
		border-left: 1px solid #d9d9d9;
	}

	.search {
		margin-left: 12px;
		width: 202px;
		height: 21px;
		flex: none;
		box-sizing: border-box;
		border: 1px solid #d9d9d9;
		display: flex;
		align-items: center;
		justify-content: space-between;
		padding: 0 8px 0 9px;
		color: #6d6d6d;
	}

	.ex-body {
		height: 389px;
		flex: none;
		display: flex;
	}

	.nav-pane {
		width: 140px;
		flex: none;
		padding-top: 1px;
		overflow: hidden;
	}

	.nav-row {
		height: 24px;
		display: flex;
		align-items: center;
		gap: 5px;
		padding-left: 32px;
		white-space: nowrap;
		color: #222;
	}

	.nav-row.child {
		padding-left: 40px;
	}

	.nav-row.current {
		background: #cdcdcd;
	}

	.nav-row svg {
		flex: none;
	}

	.vscroll {
		width: 16px;
		flex: none;
		display: flex;
		flex-direction: column;
		align-items: center;
		background: #f0f0f0;
	}

	.scroll-arrow {
		flex: none;
		margin: 4px 0;
	}

	.thumb {
		background: #cdcdcd;
	}

	.nav-scroll {
		height: 388px;
	}

	.nav-gap {
		height: 244px;
		flex: none;
	}

	.nav-thumb {
		width: 100%;
		height: 108px;
		margin-top: -18px;
	}

	.files {
		margin-left: 6px;
		flex: 1;
		display: flex;
		min-width: 0;
	}

	.list-wrap {
		width: 606px;
		flex: none;
		display: flex;
		flex-direction: column;
	}

	.list-head {
		height: 27px;
		flex: none;
		display: grid;
		grid-template-columns: 257px 144px 120px 73px;
		padding-left: 12px;
		position: relative;
		align-items: stretch;
		color: #4c607a;
	}

	.list-head .cell {
		display: flex;
		align-items: center;
		border-right: 1px solid #e5e5e5;
		padding-top: 2px;
		box-sizing: border-box;
	}

	.list-head .name {
		padding-left: 3px;
	}

	.list-head .size {
		justify-content: flex-start;
		padding: 2px 0 0 7px;
		border-right: 0;
	}

	.sort {
		position: absolute;
		left: 135px;
		top: 2px;
	}

	.rows {
		height: 346px;
		flex: none;
		overflow: hidden;
	}

	.row {
		height: 21px;
		margin-left: 12px;
		box-sizing: border-box;
		display: grid;
		grid-template-columns: 257px 143px 119px 73px;
		align-items: center;
		border: 1px solid transparent;
		color: #6d6d6d;
	}

	.row.selected {
		background: #cce8ff;
		border-color: #99d1ff;
	}

	.cell {
		padding-left: 7px;
		white-space: nowrap;
		overflow: hidden;
	}

	.row .name {
		display: flex;
		align-items: center;
		padding-left: 5px;
		color: #1e1e1e;
	}

	.file-icon {
		width: 18px;
		flex: none;
		display: flex;
	}

	.row .size {
		padding: 0;
		text-align: right;
	}

	.hscroll {
		height: 15px;
		flex: none;
		display: flex;
		align-items: center;
		background: #f0f0f0;
		padding-left: 1px;
	}

	.hscroll .scroll-arrow {
		margin: 0 3px;
	}

	.h-thumb {
		width: 556px;
		height: 100%;
		flex: none;
	}

	.list-scroll {
		width: 15px;
		height: 388px;
	}

	.list-gap {
		height: 50px;
		flex: none;
	}

	.list-thumb {
		width: 100%;
		height: 162px;
		flex: none;
	}

	.ex-status {
		flex: 1;
		display: flex;
		align-items: center;
		padding-bottom: 2px;
		color: #3a4a5a;
	}

	.st-count {
		margin-left: 14px;
		width: 65px;
	}

	.st-sel {
		width: 85px;
	}

	.view-btn {
		width: 21px;
		height: 22px;
		display: flex;
		align-items: center;
		justify-content: center;
		box-sizing: border-box;
		margin-right: 1px;
	}

	.view-btn.on {
		background: #cce8ff;
		border: 1px solid #99d1ff;
	}

	.view-btn:last-child {
		margin-right: 6px;
	}

	.watermark {
		position: absolute;
		left: 1040px;
		top: 610px;
		width: 195px;
		height: 62px;
		color: rgba(205, 222, 255, 0.6);
		pointer-events: none;
	}

	.wm-any,
	.wm-run {
		position: absolute;
		top: 3px;
		font-family: Roboto, sans-serif;
		font-weight: 400;
		font-size: 53px;
		line-height: 62px;
		letter-spacing: 0;
		transform-origin: left center;
	}

	.wm-any {
		left: 0;
		transform: scaleX(0.55);
	}

	.wm-run {
		left: 134px;
		transform: scaleX(0.52);
	}

	.wm-logo {
		position: absolute;
		left: 70px;
		top: 0;
	}

	.taskbar {
		position: absolute;
		left: 0;
		right: 0;
		bottom: 0;
		height: 40px;
		display: flex;
		align-items: stretch;
		background: #041524;
		color: #fff;
	}

	.start {
		width: 48px;
		flex: none;
		display: flex;
		align-items: center;
		justify-content: center;
	}

	.task-search {
		width: 288px;
		flex: none;
		box-sizing: border-box;
		display: flex;
		align-items: center;
		gap: 10px;
		padding-left: 12px;
		background: #f2f2f2;
		border-top: 1px solid #cfcfcf;
		color: #333;
		font-size: 14.5px;
	}

	.task-view {
		width: 49px;
		flex: none;
		display: flex;
		align-items: center;
		justify-content: center;
		margin-right: 1px;
	}

	.task-apps {
		display: flex;
	}

	.task-app {
		width: 49px;
		flex: none;
		box-sizing: border-box;
		display: flex;
		align-items: center;
		justify-content: center;
		position: relative;
	}

	.task-app.active {
		background: #22364a;
	}

	.task-app.open::after {
		content: '';
		position: absolute;
		left: 5px;
		right: 5px;
		bottom: 0;
		height: 2px;
		background: #78b4e8;
	}

	.task-app.active::after {
		left: 0;
		right: 1px;
	}

	.tray-icon {
		width: 24px;
		flex: none;
		display: flex;
		align-items: center;
		justify-content: center;
	}

	.clock {
		width: 64px;
		flex: none;
		display: flex;
		flex-direction: column;
		align-items: center;
		justify-content: center;
		line-height: 18px;
		color: #f0f0f0;
	}

	.notify {
		width: 40px;
		flex: none;
		display: flex;
		align-items: center;
		justify-content: center;
		position: relative;
	}

	.badge {
		position: absolute;
		left: 23px;
		top: 19px;
		width: 15px;
		height: 15px;
		border-radius: 50%;
		background: #50585e;
		border: 1px solid #8b9196;
		box-sizing: border-box;
		font-size: 10px;
		line-height: 13px;
		text-align: center;
		font-weight: 700;
	}

	.show-desktop {
		width: 9px;
		margin-right: 4px;
		flex: none;
		border-right: 1px solid #5a6670;
		box-sizing: border-box;
	}
</style>
